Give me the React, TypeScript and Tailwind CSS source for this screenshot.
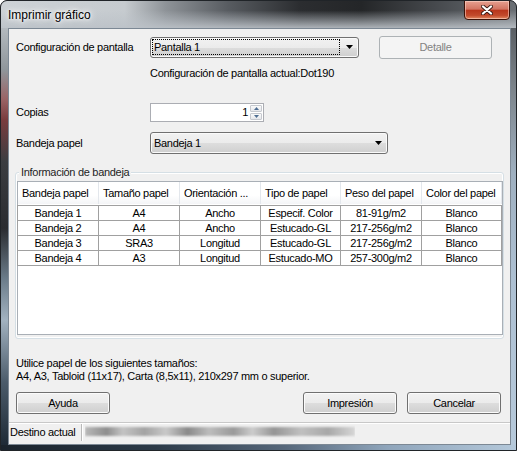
import React from "react";

const F = "font-['Liberation_Sans',Arial,sans-serif] text-[11px] tracking-[-0.3px] text-black";

function DownArrow() {
  return (
    <svg width="7" height="4" viewBox="0 0 7 4">
      <path d="M0 0H7L3.5 4Z" fill="#000" />
    </svg>
  );
}

function Combo({
  cls,
  text,
  focus,
}: {
  cls: string;
  text: string;
  focus?: boolean;
}) {
  return (
    <div
      className={`flex items-center rounded-[3px] border border-[#707070] bg-[linear-gradient(180deg,#f2f2f2_0%,#ebebeb_50%,#dddddd_51%,#cfcfcf_100%)] shadow-[inset_0_0_0_1px_#fafafa] pl-[1px] ${cls}`}
    >
      <div
        className={`flex h-[16px] flex-1 items-center pl-[1px] ${
          focus ? "border border-dotted border-black" : "border border-transparent"
        }`}
      >
        <span className="leading-[14px]">{text}</span>
      </div>
      <div className="flex w-[18px] items-center justify-center pl-[1px]">
        <DownArrow />
      </div>
    </div>
  );
}

function Btn({
  children,
  cls,
  disabled,
}: {
  children: React.ReactNode;
  cls: string;
  disabled?: boolean;
}) {
  return (
    <div
      className={`flex items-center justify-center rounded-[3px] border ${
        disabled
          ? "border-[#adb2b5] bg-[#f4f4f4] text-[#838383]"
          : "border-[#707070] bg-[linear-gradient(180deg,#f2f2f2_0%,#ebebeb_50%,#dddddd_51%,#cfcfcf_100%)] shadow-[inset_0_0_0_1px_#fbfbfb]"
      } ${cls}`}
    >
      <span className={disabled ? "text-[#838383]" : ""}>{children}</span>
    </div>
  );
}

const headers = [
  "Bandeja papel",
  "Tamaño papel",
  "Orientación ...",
  "Tipo de papel",
  "Peso del papel",
  "Color del papel",
];

const rows = [
  ["Bandeja 1", "A4", "Ancho", "Especif. Color", "81-91g/m2", "Blanco"],
  ["Bandeja 2", "A4", "Ancho", "Estucado-GL", "217-256g/m2", "Blanco"],
  ["Bandeja 3", "SRA3", "Longitud", "Estucado-GL", "217-256g/m2", "Blanco"],
  ["Bandeja 4", "A3", "Longitud", "Estucado-MO", "257-300g/m2", "Blanco"],
];

const colW = ["w-[81px]", "w-[81px]", "w-[81px]", "w-[80px]", "w-[81px]", "w-[80px]"];

export default function App() {
  return (
    <div className="flex h-[451px] w-[517px] flex-col overflow-hidden rounded-t-[7px] border border-[#202428] bg-[#2a2e33]">
      {/* Title bar */}
      <div className="relative flex h-[27px] shrink-0 items-center bg-[linear-gradient(180deg,rgba(188,194,200,0)_0%,rgba(188,194,200,0)_35%,rgba(188,194,200,0.9)_100%),linear-gradient(90deg,#cdd2d6_0%,#c6cbcf_24%,#8e9398_32%,#585c61_44%,#2b2d30_58%,#242628_70%,#45484c_84%,#6b7075_100%)] pl-[7px]">
        <span className="font-['Liberation_Sans',Arial,sans-serif] text-[12px] text-black [text-shadow:0_0_6px_#fff,0_0_3px_#fff,0_0_10px_#fff]">
          Imprimir gráfico
        </span>
        <div className="absolute right-[6px] top-[-1px] flex h-[20px] w-[46px] items-center justify-center rounded-b-[4px] border border-[#3b1208] bg-[linear-gradient(180deg,#e6a090_0%,#d27462_45%,#b8361c_52%,#c24a2c_80%,#e38a62_100%)] shadow-[inset_0_0_0_1px_rgba(255,220,210,0.55)]">
          <svg width="12" height="10" viewBox="0 0 12 10">
            <path d="M2 1.5L10 8.5M10 1.5L2 8.5" stroke="#3a1a14" strokeWidth="4" strokeLinecap="round" />
            <path d="M2 1.5L10 8.5M10 1.5L2 8.5" stroke="#fff" strokeWidth="2.3" strokeLinecap="round" />
          </svg>
        </div>
      </div>

      {/* Middle */}
      <div className="flex h-[417px] shrink-0">
        <div className="w-[7px] shrink-0 bg-[linear-gradient(180deg,#b4babf_0%,#8f969b_10%,#9a6466_17%,#7a3c3e_22%,#3b3d41_32%,#2a2c30_48%,#6a7b89_60%,#a2b2c0_70%,#4b5b6a_85%,#1e2a36_100%)]" />
        <div className={`flex w-[503px] shrink-0 flex-col border border-[#7c8894] bg-[#f0f0f0] ${F}`}>
          {/* Row 1 */}
          <div className="mt-[7px] flex h-[22px] items-center">
            <div className="w-[141px] pl-[7px]">Configuración de pantalla</div>
            <Combo cls="h-[21px] w-[209px]" text="Pantalla 1" focus />
            <Btn cls="ml-[20px] h-[23px] w-[113px]" disabled>
              Detalle
            </Btn>
          </div>
          {/* Row 2 */}
          <div className="mt-[8px] h-[14px] pl-[141px] leading-[14px]">
            Configuración de pantalla actual:Dot190
          </div>
          {/* Copias */}
          <div className="mt-[23px] flex h-[19px] items-center">
            <div className="w-[141px] pl-[7px]">Copias</div>
            <div className="flex h-[19px] w-[114px] border border-[#abadb3] bg-white">
              <div className="flex-1 pr-[2px] text-right leading-[17px]">1</div>
              <div className="flex w-[13px] flex-col gap-[1px] p-[1px] pl-0">
                <div className="flex flex-1 items-center justify-center rounded-[1px] border border-[#c6c9cf] bg-[linear-gradient(180deg,#fafafa,#e6e8ec)]">
                  <svg width="5" height="3" viewBox="0 0 5 3">
                    <path d="M0 3H5L2.5 0Z" fill="#4f6e92" />
                  </svg>
                </div>
                <div className="flex flex-1 items-center justify-center rounded-[1px] border border-[#c6c9cf] bg-[linear-gradient(180deg,#fafafa,#e6e8ec)]">
                  <svg width="5" height="3" viewBox="0 0 5 3">
                    <path d="M0 0H5L2.5 3Z" fill="#4f6e92" />
                  </svg>
                </div>
              </div>
            </div>
          </div>
          {/* Bandeja */}
          <div className="mt-[10px] flex h-[22px] items-center">
            <div className="w-[141px] pl-[7px]">Bandeja papel</div>
            <Combo cls="h-[22px] w-[238px]" text="Bandeja 1" />
          </div>
          {/* Group box */}
          <div className="relative ml-[6px] mt-[18px] h-[167px] w-[489px] rounded-[3px] border border-[#d5dfe5] pb-[2px] pl-[1px] pt-[8px] shadow-[inset_0_0_0_1px_#ffffff]">
            <div className="absolute left-[3px] top-[-8px] bg-[#f0f0f0] px-[2px] leading-[14px] text-[#1e1e1e]">
              Información de bandeja
            </div>
            <div className="h-[154px] w-[486px] border border-[#a9afb6] bg-white">
              <div className="flex h-[22px] bg-[linear-gradient(180deg,#ffffff_0%,#ffffff_60%,#f4f5f7_100%)]">
                {headers.map((h, i) => (
                  <div
                    key={h}
                    className={`${colW[i]} flex items-center overflow-hidden whitespace-nowrap border-r border-[#e3e7ec] pl-[4px]`}
                  >
                    {h}
                  </div>
                ))}
              </div>
              <div className="-ml-px mt-px border-t border-[#a0a0a0]">
                {rows.map((r, ri) => (
                  <div key={ri} className="flex h-[15px] border-b border-l border-[#a0a0a0]">
                    {r.map((c, ci) => (
                      <div
                        key={ci}
                        className={`${colW[ci]} ${ci === 0 ? "w-[80px]" : ""} flex items-center justify-center border-r border-[#a0a0a0] leading-[13px]`}
                      >
                        {c}
                      </div>
                    ))}
                  </div>
                ))}
              </div>
            </div>
          </div>
          {/* Text */}
          <div className="mt-[18px] pl-[7px] leading-[13px]">
            <div>Utilice papel de los siguientes tamaños:</div>
            <div>A4, A3, Tabloid (11x17), Carta (8,5x11), 210x297 mm o superior.</div>
          </div>
          {/* Buttons */}
          <div className="mt-[9px] flex h-[22px] items-center pl-[7px] pr-[9px]">
            <Btn cls="h-[22px] w-[94px]">Ayuda</Btn>
            <div className="flex-1" />
            <Btn cls="h-[22px] w-[94px]">Impresión</Btn>
            <Btn cls="ml-[10px] h-[22px] w-[94px]">Cancelar</Btn>
          </div>
          {/* Status bar */}
          <div className="mt-auto flex h-[22px] border-t border-[#c8c8c8] pt-[1px] shadow-[inset_0_1px_0_#ffffff]">
            <div className="flex h-[17px] w-[73px] items-center border-r border-[#b9b9b9] pl-[1px] shadow-[1px_0_0_#ffffff]">
              Destino actual
            </div>
            <div className="ml-[3px] mt-[1px] flex h-[13px] w-[270px] items-center overflow-hidden">
              <div className="h-[9px] w-full bg-[linear-gradient(90deg,#b9b9b9_0%,#8e8e8e_8%,#c4c4c4_14%,#a3a3a3_22%,#c9c9c9_30%,#8a8a8a_38%,#bdbdbd_46%,#9a9a9a_55%,#cccccc_62%,#959595_70%,#c0c0c0_80%,#a8a8a8_90%,#d6d6d6_100%)] blur-[1px]" />
            </div>
          </div>
        </div>
        <div className="w-[5px] shrink-0 bg-[linear-gradient(180deg,#5a5f64_0%,#7d858c_15%,#9fb0c0_35%,#adc0d2_60%,#b6c9da_100%)]" />
      </div>

      {/* Bottom */}
      <div className="h-[5px] shrink-0 bg-[linear-gradient(90deg,#1a232c_0%,#2c3a48_30%,#56677a_55%,#8fa5bb_75%,#b4c8da_100%)]" />
    </div>
  );
}
